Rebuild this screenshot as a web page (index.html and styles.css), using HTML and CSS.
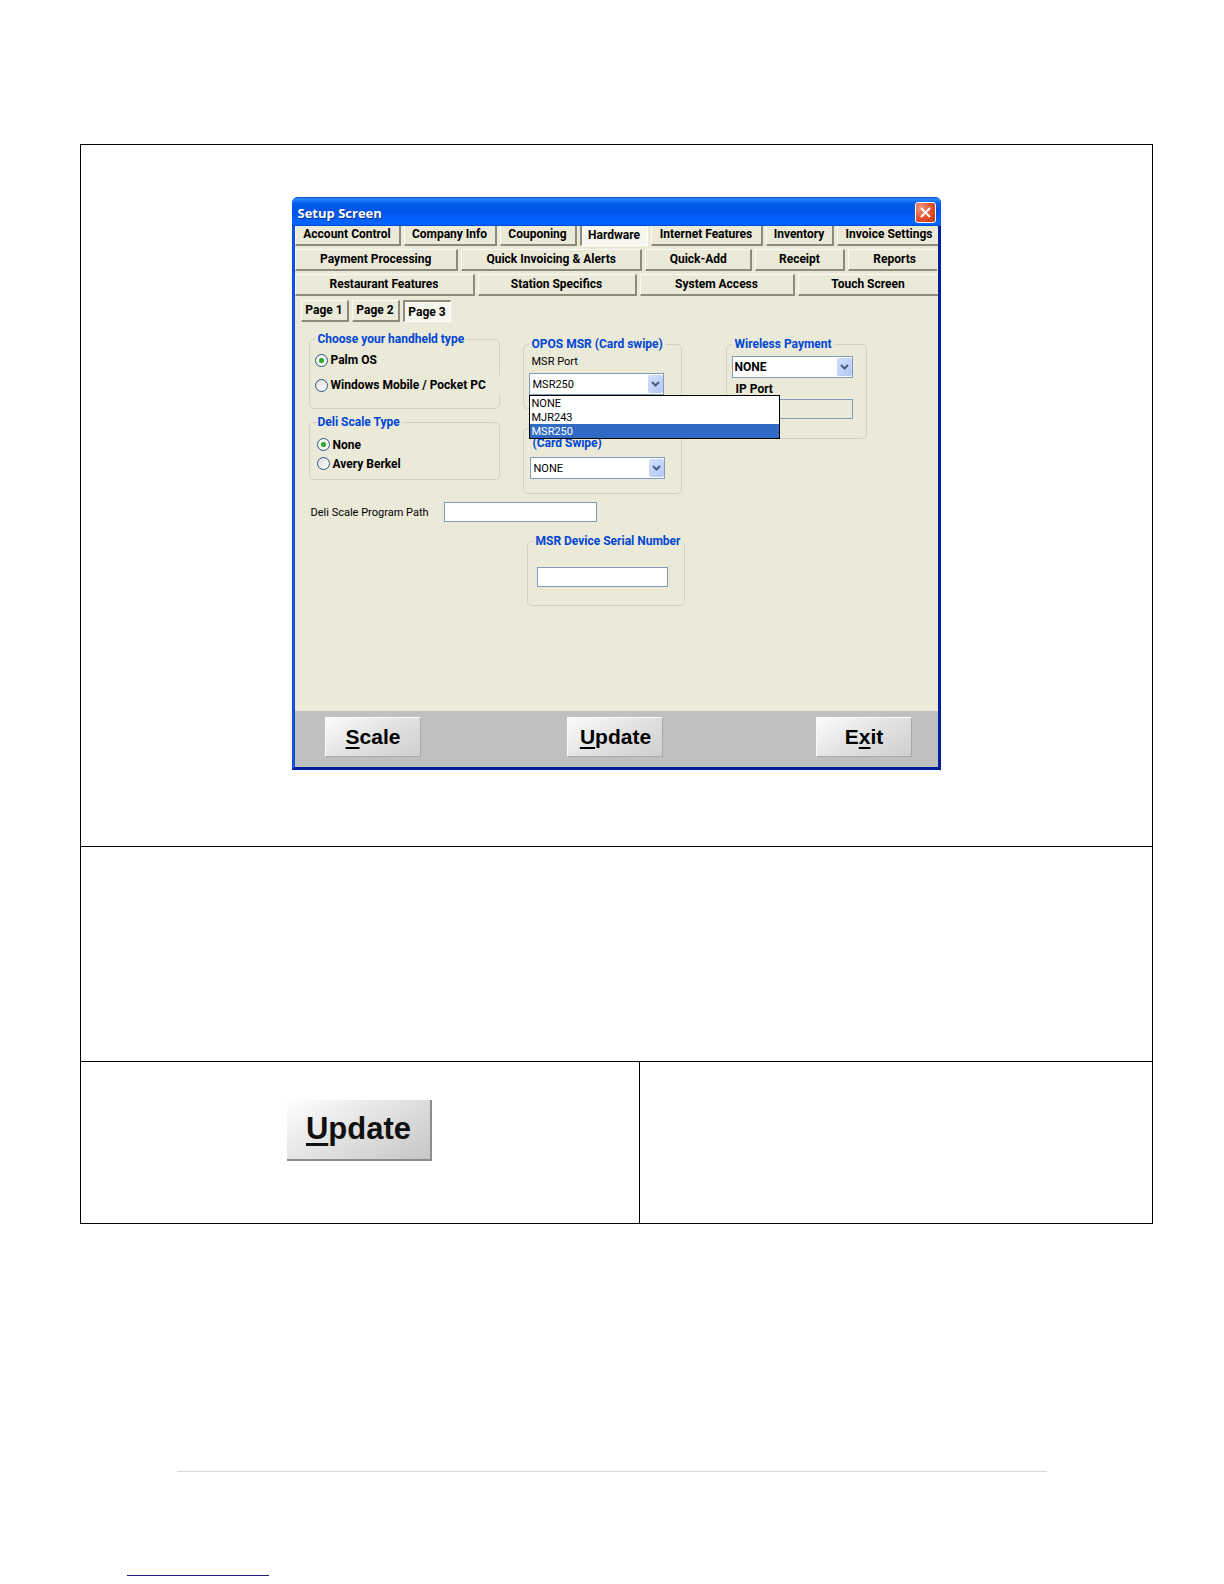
FILE: index.html
```html
<!DOCTYPE html>
<html lang="en">
<head>
<meta charset="utf-8">
<meta name="viewport" content="width=device-width, initial-scale=1">
<title>Setup Screen</title>
<link rel="stylesheet" href="styles.css">
</head>
<body>
<main class="sheet">
  <div class="frame">
    <section class="cell cell-screen">
      <div class="window">
        <header class="titlebar">
          <h1 class="title">Setup Screen</h1>
          <button class="close" type="button" aria-label="Close">
            <svg width="11" height="11" viewBox="0 0 11 11" aria-hidden="true"><path d="M1 1L10 10M10 1L1 10" stroke="#fff" stroke-width="2" fill="none"/></svg>
          </button>
        </header>
        <nav class="tabs" aria-label="Setup sections">
          <div class="tab-row row-a">
            <button class="tab" type="button">Account Control</button>
            <button class="tab" type="button">Company Info</button>
            <button class="tab" type="button">Couponing</button>
            <button class="tab pressed" type="button">Hardware</button>
            <button class="tab" type="button">Internet Features</button>
            <button class="tab" type="button">Inventory</button>
            <button class="tab" type="button">Invoice Settings</button>
          </div>
          <div class="tab-row row-b">
            <button class="tab" type="button">Payment Processing</button>
            <button class="tab" type="button">Quick Invoicing &amp; Alerts</button>
            <button class="tab" type="button">Quick-Add</button>
            <button class="tab" type="button">Receipt</button>
            <button class="tab" type="button">Reports</button>
          </div>
          <div class="tab-row row-c">
            <button class="tab" type="button">Restaurant Features</button>
            <button class="tab" type="button">Station Specifics</button>
            <button class="tab" type="button">System Access</button>
            <button class="tab" type="button">Touch Screen</button>
          </div>
        </nav>
        <form class="pane">
          <div class="pages">
            <button class="tab" type="button">Page 1</button>
            <button class="tab" type="button">Page 2</button>
            <button class="tab pressed" type="button">Page 3</button>
          </div>
          <div class="groups">
            <div class="col col-left">
              <fieldset class="group handheld">
                <legend>Choose your handheld type</legend>
                <label class="choice"><input type="radio" name="handheld" checked>Palm OS</label>
                <label class="choice"><input type="radio" name="handheld">Windows Mobile / Pocket PC</label>
              </fieldset>
              <fieldset class="group scale-type">
                <legend>Deli Scale Type</legend>
                <label class="choice"><input type="radio" name="scale" checked>None</label>
                <label class="choice"><input type="radio" name="scale">Avery Berkel</label>
              </fieldset>
            </div>
            <div class="col col-mid">
              <fieldset class="group opos">
                <legend>OPOS MSR (Card swipe)</legend>
                <label class="caption" for="msr-port">MSR Port</label>
                <div class="combo">
                  <select id="msr-port"><option>NONE</option><option>MJR243</option><option selected>MSR250</option></select>
                  <span class="arrow"><svg width="9" height="7" viewBox="0 0 9 7" aria-hidden="true"><path d="M1 1L4.500 4.500L8 1" stroke="#4d6185" stroke-width="2.200" fill="none"/></svg></span>
                  <ul class="menu" role="listbox" aria-label="MSR Port">
                    <li role="option">NONE</li>
                    <li role="option">MJR243</li>
                    <li role="option" class="selected" aria-selected="true">MSR250</li>
                  </ul>
                </div>
              </fieldset>
              <fieldset class="group swipe">
                <legend>(Card Swipe)</legend>
                <div class="combo">
                  <select aria-label="Card Swipe"><option>NONE</option></select>
                  <span class="arrow"><svg width="9" height="7" viewBox="0 0 9 7" aria-hidden="true"><path d="M1 1L4.500 4.500L8 1" stroke="#4d6185" stroke-width="2.200" fill="none"/></svg></span>
                </div>
              </fieldset>
            </div>
            <div class="col col-right">
              <fieldset class="group wireless">
                <legend>Wireless Payment</legend>
                <div class="combo">
                  <select class="strong" aria-label="Wireless Payment"><option>NONE</option></select>
                  <span class="arrow"><svg width="9" height="7" viewBox="0 0 9 7" aria-hidden="true"><path d="M1 1L4.500 4.500L8 1" stroke="#4d6185" stroke-width="2.200" fill="none"/></svg></span>
                </div>
                <label class="caption strong" for="ip-port">IP Port</label>
                <input class="field" id="ip-port" type="text" disabled>
              </fieldset>
            </div>
          </div>
          <div class="path-row">
            <label for="path">Deli Scale Program Path</label>
            <input class="field" id="path" type="text">
          </div>
          <fieldset class="group serial">
            <legend>MSR Device Serial Number</legend>
            <input class="field" type="text" aria-label="MSR Device Serial Number">
          </fieldset>
        </form>
        <footer class="actions">
          <button class="action" type="button"><u>S</u>cale</button>
          <button class="action middle" type="button"><u>U</u>pdate</button>
          <button class="action" type="button">E<u>x</u>it</button>
        </footer>
      </div>
    </section>
    <section class="cell cell-notes"></section>
    <div class="split">
      <section class="cell cell-button">
        <button class="action large" type="button"><u>U</u>pdate</button>
      </section>
      <section class="cell"></section>
    </div>
  </div>
  <hr class="foot-rule">
  <div class="foot-link"></div>
</main>
</body>
</html>
```
FILE: styles.css
```css
* { box-sizing: border-box; }

body {
  margin: 0;
  background: #fff;
  color: #000;
  font: 11px/14px Roboto, "Liberation Sans", sans-serif;
}

button, input, select { font: inherit; color: inherit; margin: 0; }

.sheet { padding: 144px 71px 8px 80px; }

/* Ruled frame around the document's cells */
.frame { border: 1px solid #000; }
.cell-screen {
  display: flex;
  justify-content: center;
  padding: 52px 10px 76px 9px;
}
.cell-notes { min-height: 215px; border-top: 1px solid #000; }
.split {
  display: grid;
  grid-template-columns: 559fr 512fr;
  min-height: 162px;
  border-top: 1px solid #000;
}
.cell-button {
  display: flex;
  justify-content: center;
  align-items: flex-start;
  padding: 38px 2px 0 0;
  border-right: 1px solid #000;
}

/* Window */
.window {
  width: 100%;
  max-width: 649px;
  background: #ebe9d8;
  border: 3px solid #0831d9;
  border-top: 0;
  border-color: #0a4ddd #001ea0 #001ea0 #0f52dc;
  border-radius: 6px 6px 0 0;
}
.titlebar {
  display: flex;
  align-items: center;
  justify-content: space-between;
  height: 29px;
  margin: 0 -3px;
  padding: 2px 5px 0 6px;
  border-radius: 6px 6px 0 0;
  background: linear-gradient(#0a50c8 0, #2a8bff 2px, #0560ee 6px, #0054e6 14px, #0360fb 22px, #0366ff 27px, #0148cc 29px);
}
.title {
  margin: 0;
  color: #fff;
  font: bold 13px/16px "Open Sans", "Noto Sans", sans-serif;
  text-shadow: 1px 1px 0 #0a2f8f;
}
.close {
  display: grid;
  place-items: center;
  width: 21px;
  height: 21px;
  padding: 0;
  border: 1px solid #fff;
  border-radius: 3px;
  background: radial-gradient(circle at 25% 25%, #f0967c, #e0502c 55%, #c03a10);
}

/* Tabs */
.tabs { display: grid; gap: 3px; }
.tab-row { display: grid; column-gap: 3px; }
.row-a { grid-template-columns: 106fr 93fr 77fr 68fr 112fr 68fr 101fr; }
.row-b { grid-template-columns: 164fr 182fr 107fr 90fr 90fr; }
.row-c { grid-template-columns: 180fr 159fr 155fr 140fr; }
.tab {
  height: 22px;
  padding: 0 0 1px;
  overflow: hidden;
  white-space: nowrap;
  border: solid;
  border-width: 1px 2px 2px 1px;
  border-color: #fbfaf3 #8d8b7c #8d8b7c #fbfaf3;
  background: #ebe9d8;
  font-weight: bold;
  font-size: 12px;
  line-height: 14px;
}
.row-a .tab { height: 20px; padding-bottom: 2px; border-top: 0; }
.row-a .tab:last-child, .row-b .tab:last-child { padding-left: 3px; }
.row-a .tab:last-child, .row-b .tab:last-child, .row-c .tab:last-child { border-right: 0; }
.tab.pressed {
  padding-bottom: 0;
  border-width: 2px 1px 1px 2px;
  border-color: #8d8b7c #fff #fff #8d8b7c;
  background: #f6f5ee;
}
.row-a .tab.pressed { padding-bottom: 1px; }

/* Settings pane */
.pane { min-height: 415px; padding: 4px 6px 0; }
.pages { display: grid; grid-template-columns: repeat(3, 48px); gap: 3px; }
.groups { display: flex; align-items: flex-start; padding: 10px 8px 0; }
.col { display: flex; flex-direction: column; }
.col-left { width: 191px; gap: 6px; }
.col-mid { width: 159px; gap: 19px; margin: 5px 0 0 23px; }
.col-right { width: 141px; margin: 5px 0 0 44px; }

.group {
  display: block;
  min-width: 0;
  margin: 0;
  padding: 0 5px;
  border: 1px solid #d0d0bf;
  border-radius: 5px;
}
.group legend {
  padding: 0 3px;
  color: #0046d5;
  font-weight: bold;
  font-size: 12px;
  line-height: 14px;
  white-space: nowrap;
}
.handheld { padding-top: 4px; padding-bottom: 13px; }
.scale-type { padding: 6px 5px 6px 7px; }
.scale-type legend { padding-left: 1px; }
.choice {
  display: flex;
  align-items: center;
  gap: 3px;
  height: 19px;
  font-weight: bold;
  font-size: 12px;
  white-space: nowrap;
}
.handheld .choice { height: 20px; }
.handheld .choice + .choice { margin: 5px -6px 0 0; background: #ebe9d8; }
.choice input {
  appearance: none;
  flex: none;
  width: 13px;
  height: 13px;
  border: 1px solid #28588c;
  border-radius: 50%;
  background: linear-gradient(135deg, #dcdcd7, #fff);
}
.choice input:checked { background: radial-gradient(circle, #2fb52c 0, #21a121 2px, #f4f4f1 3px); }

.caption { display: block; padding: 4px 3px; }
.opos { min-height: 72px; }
.swipe { min-height: 66px; padding: 7px 6px 0; }
.swipe legend { float: left; width: 100%; }
.swipe .combo { clear: both; padding-top: 7px; }
.wireless { padding-top: 5px; padding-bottom: 19px; }
.wireless .combo { width: 121px; }
.wireless .field { width: 121px; }
.wireless .caption { padding: 4px 4px 3px; }
.strong { font-weight: bold; font-size: 12px; }

.combo { position: relative; width: 135px; }
.combo select {
  appearance: none;
  display: block;
  width: 100%;
  height: 22px;
  padding: 1px 20px 0 3px;
  border: 1px solid #7f9db9;
  border-radius: 0;
  background: #fff;
}
.combo .strong { padding: 0 20px 0 2px; }
.arrow {
  position: absolute;
  right: 1px;
  bottom: 2px;
  display: grid;
  place-items: center;
  width: 15px;
  height: 18px;
  border-radius: 2px;
  background: linear-gradient(135deg, #d3dffd, #b2c6f5);
  pointer-events: none;
}
.menu {
  position: absolute;
  z-index: 2;
  top: 22px;
  left: 0;
  width: 251px;
  margin: 0;
  padding: 0;
  list-style: none;
  border: 1px solid #000;
  background: #fff;
}
.menu li { height: 14px; padding-left: 2px; line-height: 16px; }
.menu .selected { background: #316ac5; color: #fff; }

.field {
  display: block;
  height: 20px;
  padding: 0 3px;
  border: 1px solid #7f9db9;
  background: #fff;
}
.field:disabled { background: #ebe9d8; }

.path-row { display: flex; align-items: center; padding: 8px 0 0 10px; }
.path-row label { width: 133px; padding-top: 2px; }
.path-row .field { width: 153px; }

.serial { width: 158px; margin: 12px 0 0 226px; padding: 19px 9px 18px; }
.serial legend { margin-left: -4px; }
.serial .field { width: 131px; }

/* Bottom bar */
.actions {
  display: flex;
  justify-content: space-between;
  padding: 6px 26px 10px 30px;
  background: #c0c0be;
}
.action {
  width: 96px;
  height: 40px;
  padding: 0 0 1px 1px;
  border: 1px solid;
  border-color: #fafafa #a8a8a8 #a8a8a8 #fafafa;
  background: linear-gradient(150deg, #fbfbfb, #e2e2e2 50%, #cfcfcf);
  font: bold 21px/24px "Liberation Sans", Arial, sans-serif;
}
.action.middle { margin-right: 6px; }
.action u { text-decoration-thickness: 2px; text-underline-offset: 3px; text-decoration-skip-ink: none; }
.action.large {
  width: 145px;
  height: 61px;
  padding-bottom: 1px;
  border-width: 0 2px 2px 0;
  border-color: #8c8c8c;
  background: linear-gradient(150deg, #fff, #e4e4e4 45%, #c6c6c6);
  color: #111;
  font-size: 31px;
  line-height: 36px;
}
.action.large u { text-decoration-thickness: 3px; text-underline-offset: 4px; }

/* Page foot */
.foot-rule {
  margin: 247px 106px 0 97px;
  border: 0;
  border-top: 1px solid #d9d9d9;
}
.foot-link { width: 142px; margin: 103px 0 0 47px; border-top: 1px solid #1a1a80; }
```
